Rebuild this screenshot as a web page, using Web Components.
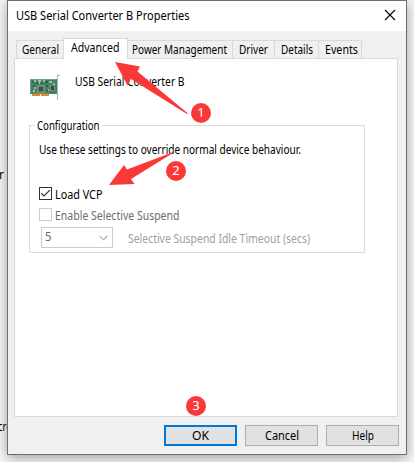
<!DOCTYPE html>
<html lang="en">
<head>
<meta charset="utf-8">
<title>USB Serial Converter B Properties</title>
<style>
html,body{margin:0;width:414px;height:462px;overflow:hidden}
body{background:#f7f7f7;position:relative;font-family:"Noto Sans","Open Sans",sans-serif;font-size:12px;color:#000}
.behind{position:absolute;left:-1px}
</style>
</head>
<body>
<fit-text class="behind" style="top:166px" w="5">r</fit-text>
<fit-text class="behind" style="top:418px;left:-2px" w="14">cro</fit-text>
<properties-dialog></properties-dialog>
<step-notes></step-notes>
<script>
// A single line of text condensed to a fixed width.
class FitText extends HTMLElement{
  connectedCallback(){
    const r=this.attachShadow({mode:'open'});
    r.innerHTML=`<style>:host{display:block;height:16px;line-height:18px;white-space:nowrap;flex:none}
      span{display:inline-block;transform-origin:0 50%}</style><span><slot></slot></span>`;
    const w=+this.getAttribute('w');
    this.style.width=w+'px';
    const s=r.querySelector('span');
    s.style.transform=`scaleX(${w/s.getBoundingClientRect().width})`;
  }
}
class TabItem extends HTMLElement{
  connectedCallback(){
    this.attachShadow({mode:'open'}).innerHTML=`<style>
      :host{display:block;box-sizing:border-box;height:18px;border:1px solid #d9d9d9;border-bottom:0;border-left:0;background:#f0f0f0;padding:0 0 0 var(--pad,6px);flex:none}
      :host([first]){border-left:1px solid #d9d9d9}
      :host([active]){height:21px;margin:0 0 -1px -1px;border-left:1px solid #d9d9d9;background:#fff;z-index:1}
      </style><slot></slot>`;
  }
}
class CheckBox extends HTMLElement{
  connectedCallback(){
    const on=this.hasAttribute('checked');
    this.attachShadow({mode:'open'}).innerHTML=`<style>
      :host{display:flex;height:16px;gap:3px;color:${on?'#000':'#6d6d6d'}}
      ::slotted(*){margin-top:1px}
      svg{flex:none;margin-top:2px}</style>
      <svg width="13" height="13" viewBox="0 0 13 13"><rect x=".5" y=".5" width="12" height="12" fill="#fff" stroke="${on?'#333':'#ccc'}"/>
      ${on?'<path d="M2.200 6.3 5 9 10.8 3.2" fill="none" stroke="#333" stroke-width="1.200"/>':''}</svg><slot></slot>`;
  }
}
class PushButton extends HTMLElement{
  connectedCallback(){
    this.attachShadow({mode:'open'}).innerHTML=`<style>
      :host{box-sizing:border-box;display:flex;width:73px;height:21px;justify-content:center;border:1px solid #adadad;background:#e1e1e1;padding-top:1px}
      :host([primary]){border:2px solid #0078d7;padding-top:0}
      </style><slot></slot>`;
  }
}
class CardIcon extends HTMLElement{
  connectedCallback(){
    this.attachShadow({mode:'open'}).innerHTML=`<style>:host{display:block;width:32px;height:26px}svg{display:block}</style>
    <svg width="32" height="26" viewBox="0 0 32 26">
      <path d="M31 1.500H28.500V26" fill="none" stroke="#b4b4b4" stroke-width="1.1"/>
      <rect x="1" y="5" width="27" height="15" fill="#3f8464"/>
      <path d="M1 5.5H27M1.5 5V19" stroke="#69a585"/>
      <path d="M3 19.500H11V22H3zM12 19.500H20V22H12z" fill="#d98b32"/>
      <path d="M5 7H7M9 7H12M14 7H16M20 8H23M4 17H6M5 14H7M19 16H20M25 9V11M10 9H11" stroke="#c3d3c9" stroke-width="1.3"/>
      <path d="M3 8H5M7 9H9M12 9H14M16 8H19M4 12H6" stroke="#2f5546" stroke-width="1.6"/>
      <rect x="9" y="12" width="6" height="6" fill="#444c50" stroke="#93a59c"/>
      <rect x="21.500" y="11.500" width="4" height="5" fill="#35463f" stroke="#8aa996" stroke-width=".7"/>
      <path d="M18 11V13M18 16V17" stroke="#25583f" stroke-width="1.600"/>
    </svg>`;
  }
}
class GroupBox extends HTMLElement{
  connectedCallback(){
    this.attachShadow({mode:'open'}).innerHTML=`<style>
      :host{display:block;box-sizing:border-box;width:336px;height:128px;border:1px solid #dcdcdc}
      .legend{display:block;width:max-content;margin:-9px 0 0 5px;padding:0 2px;background:#fff}
      .body{display:flex;flex-direction:column;align-items:flex-start}
      </style><div class="legend"><slot name="legend"></slot></div><div class="body"><slot></slot></div>`;
  }
}
class ComboBox extends HTMLElement{
  connectedCallback(){
    this.attachShadow({mode:'open'}).innerHTML=`<style>
      :host{display:flex;box-sizing:border-box;width:72px;height:21px;border:1px solid #ccc;justify-content:space-between;padding:0 4px 0 3px;color:#6d6d6d}
      svg{margin-top:7px}</style><slot></slot><svg width="9" height="7" viewBox="0 0 9 7"><path d="M.7 1 4.5 4.8 8.3 1" fill="none" stroke="#aaa" stroke-width="1.1"/></svg>`;
  }
}
class PropertiesDialog extends HTMLElement{
  connectedCallback(){
    this.attachShadow({mode:'open'}).innerHTML=`<style>
      :host{box-sizing:border-box;display:flex;flex-direction:column;position:relative;width:400px;height:455px;margin-left:7px;border:1px solid #6e6e70;background:#f0f0f0;box-shadow:0 3px 12px rgba(0,0,0,.36)}
      header{display:flex;justify-content:space-between;background:#fff;height:30px;padding:0 10px 0 8px;flex:none}
      header fit-text{margin-top:6px}
      header svg{margin-top:8px}
      nav{display:flex;align-items:flex-end;height:20px;margin:7px 0 0 8px;flex:none}
      main{box-sizing:border-box;width:384px;height:359px;margin-left:6px;border:1px solid #d9d9d9;background:#fff;flex:none}
      .device{display:flex;gap:14px;margin:15px 0 0 14px;height:26px}
      group-box{margin:25px 0 0 14px}
      .line{display:flex;gap:15px;margin:5px 0 0 11px}
      footer{display:flex;gap:8px;margin:8px 0 0 156px}
      </style>
      <header><fit-text w="173.500">USB Serial Converter B Properties</fit-text>
        <svg width="12" height="12" viewBox="0 0 12 12"><path d="M1 1 11 11M11 1 1 11" stroke="#000" stroke-width="1.1"/></svg></header>
      <nav>
        <tab-item first style="width:48px;--pad:5px"><fit-text w="37">General</fit-text></tab-item>
        <tab-item active style="width:65px;--pad:7px"><fit-text w="48.500">Advanced</fit-text></tab-item>
        <tab-item style="width:105px;--pad:4px"><fit-text w="95">Power Management</fit-text></tab-item>
        <tab-item style="width:42px"><fit-text w="29">Driver</fit-text></tab-item>
        <tab-item style="width:44px"><fit-text w="32">Details</fit-text></tab-item>
        <tab-item style="width:43px"><fit-text w="33">Events</fit-text></tab-item>
      </nav>
      <main>
        <div class="device"><card-icon></card-icon><fit-text w="109.500" style="margin-top:-1px;margin-left:-.5px">USB Serial Converter B</fit-text></div>
        <group-box>
          <fit-text slot="legend" w="62.500">Configuration</fit-text>
          <fit-text w="262" style="margin:8px 0 0 9px">Use these settings to override normal device behaviour.</fit-text>
          <check-box checked style="margin:28px 0 0 9px"><fit-text w="47.500">Load VCP</fit-text></check-box>
          <check-box style="margin:5px 0 0 9px"><fit-text w="124.500">Enable Selective Suspend</fit-text></check-box>
          <div class="line"><combo-box><fit-text w="6.5">5</fit-text></combo-box><fit-text w="182" style="margin-top:3px;color:#a0a0a0">Selective Suspend Idle Timeout (secs)</fit-text></div>
        </group-box>
      </main>
      <footer><push-button primary><fit-text w="17">OK</fit-text></push-button><push-button><fit-text w="34">Cancel</fit-text></push-button><push-button><fit-text w="22">Help</fit-text></push-button></footer>`;
  }
}
// Numbered markers and arrows laid over the dialog.
class StepNotes extends HTMLElement{
  connectedCallback(){
    this.attachShadow({mode:'open'}).innerHTML=`<style>
      :host{position:absolute;inset:0}
      svg{position:absolute;left:0;top:0}
      b{position:absolute;width:20px;height:20px;border-radius:50%;background:#fb3838;color:#fff;font-weight:400;font-size:13px;line-height:19px;text-align:center}
      </style>
      <svg width="414" height="462" viewBox="0 0 414 462" fill="#fb3838">
        <path d="M115 62 140 66.5 137.5 71.5 188 113.5 187 114 131 79 127.5 85.500Z"/>
        <path d="M109 185 124 165 127 169.500 172 152.500 173 153 131 179 134.500 184Z"/>
      </svg>
      <b style="left:191px;top:103px">1</b><b style="left:166px;top:161px">2</b><b style="left:186px;top:396px">3</b>`;
  }
}
customElements.define('fit-text',FitText);
customElements.define('tab-item',TabItem);
customElements.define('check-box',CheckBox);
customElements.define('push-button',PushButton);
customElements.define('card-icon',CardIcon);
customElements.define('group-box',GroupBox);
customElements.define('combo-box',ComboBox);
customElements.define('properties-dialog',PropertiesDialog);
customElements.define('step-notes',StepNotes);
</script>
</body>
</html>
